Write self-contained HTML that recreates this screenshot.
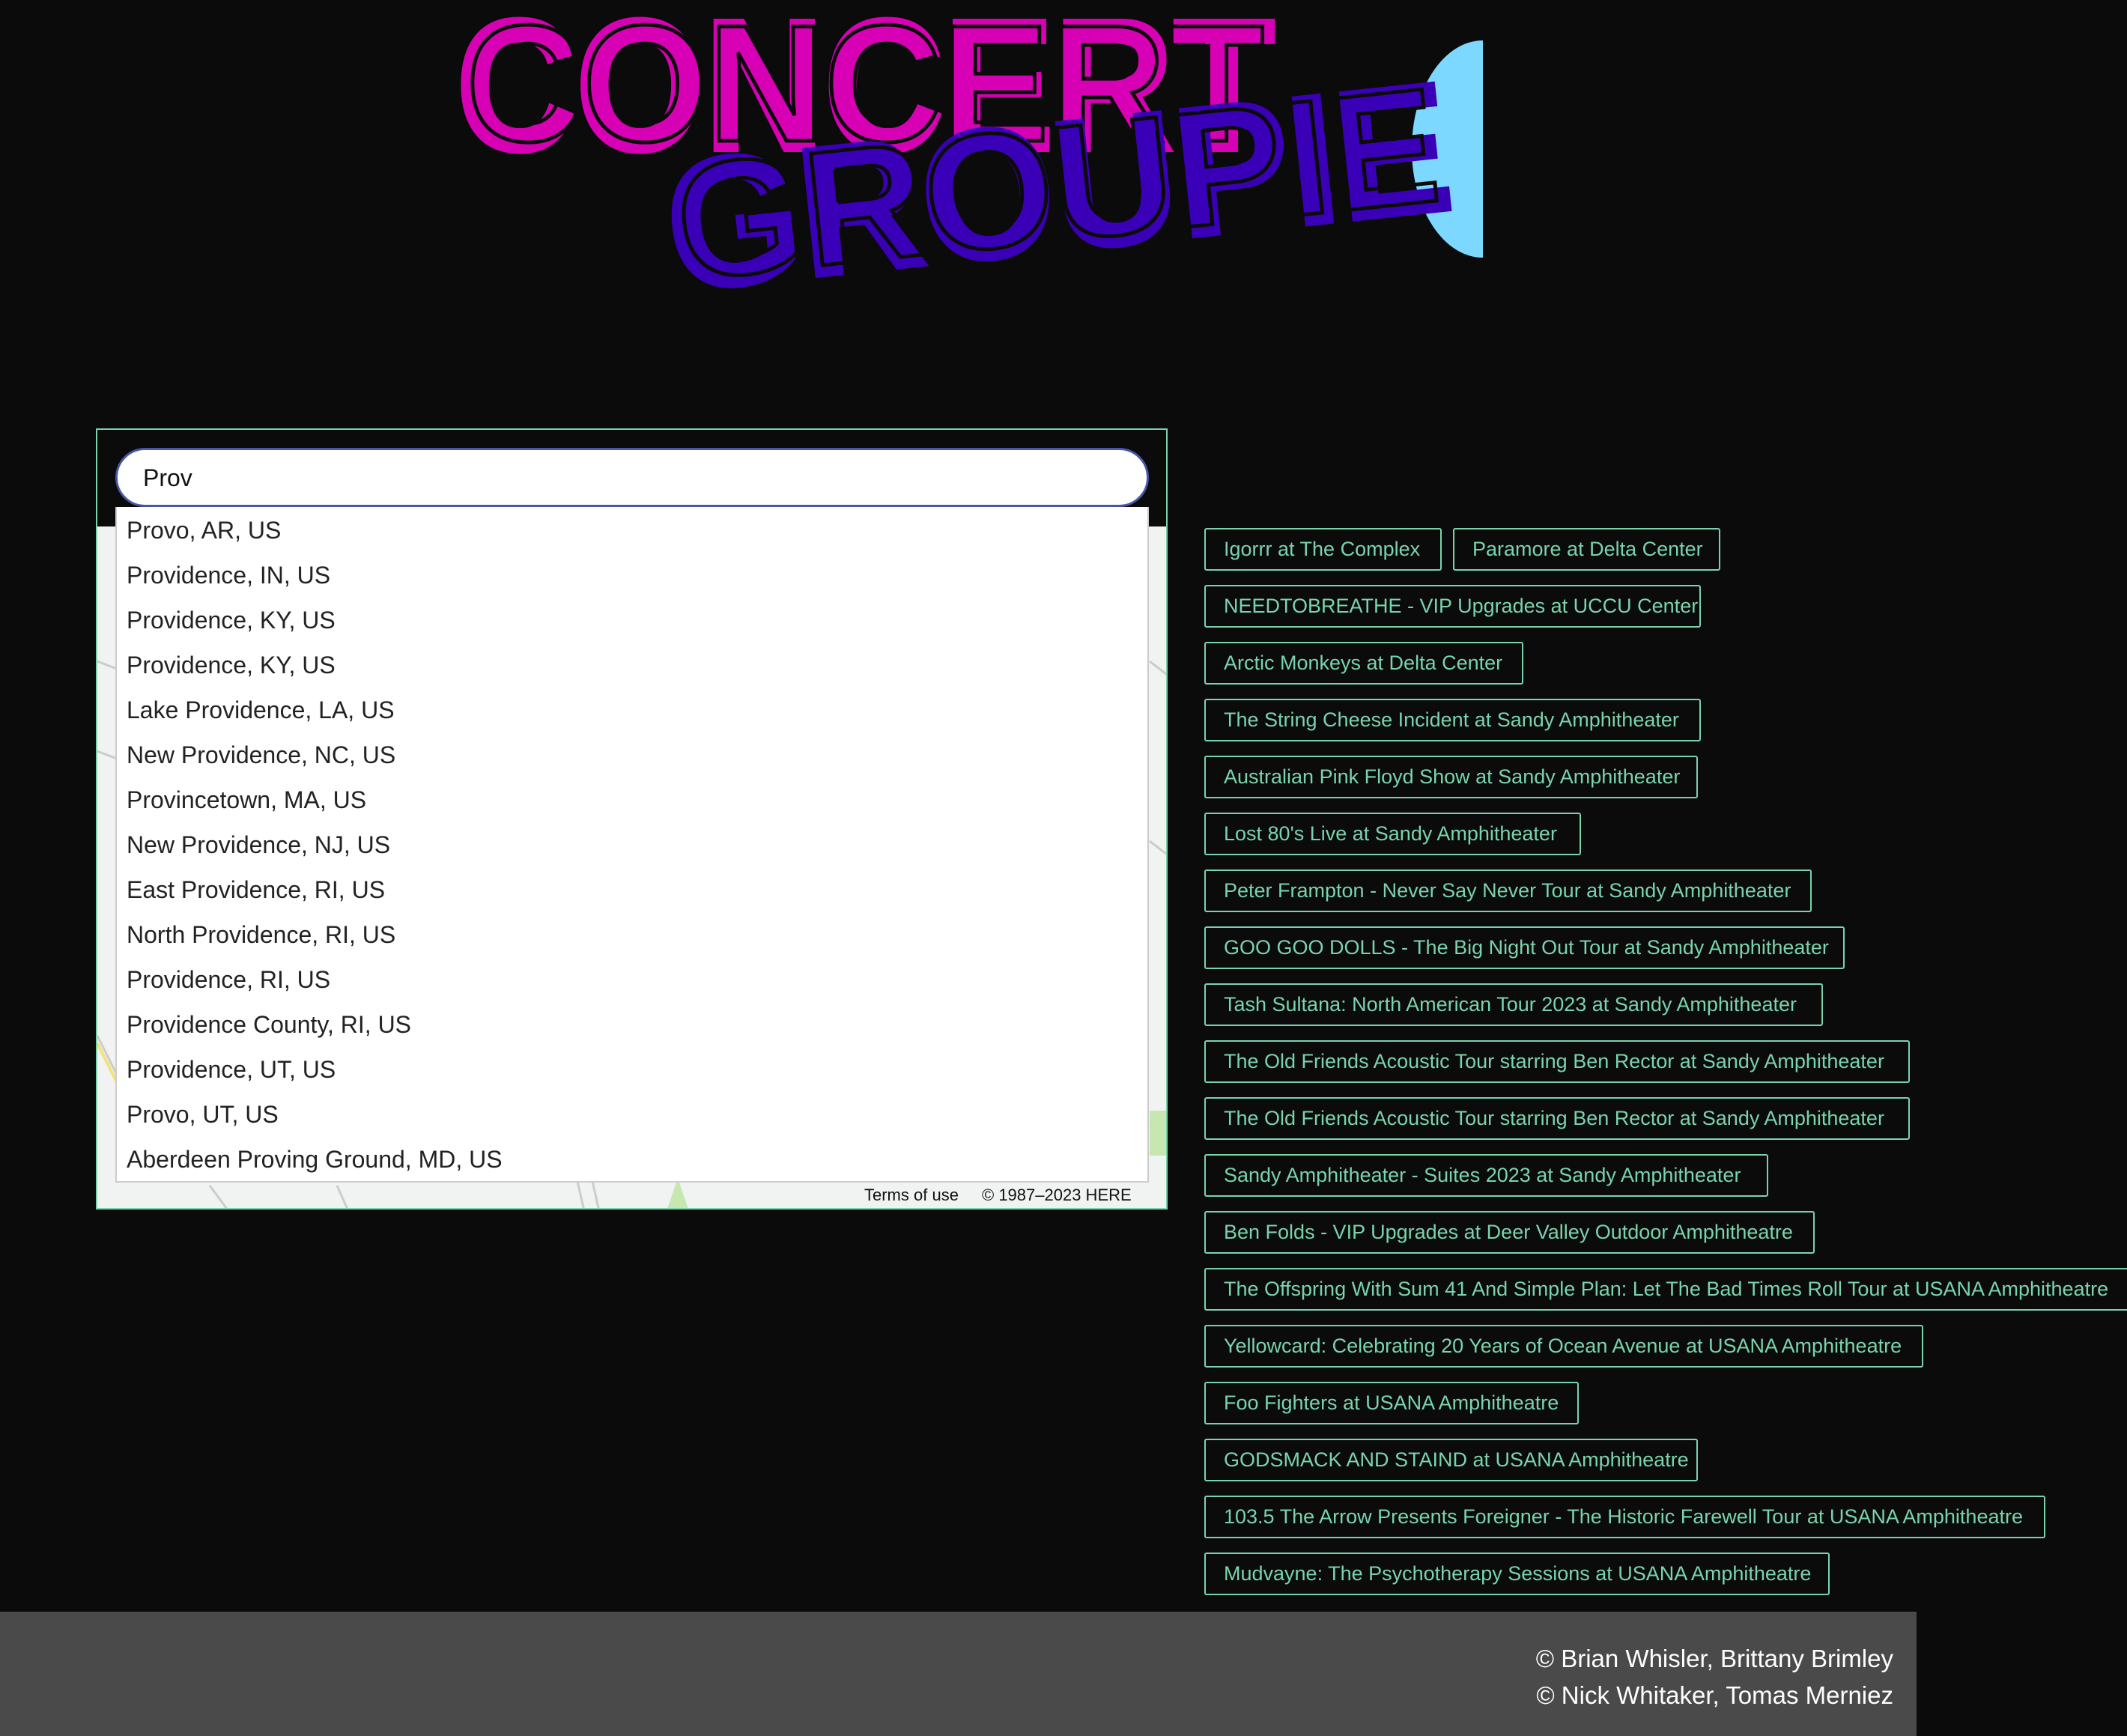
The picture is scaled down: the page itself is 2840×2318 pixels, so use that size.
<!DOCTYPE html>
<html><head><meta charset="utf-8"><style>
*{box-sizing:border-box;margin:0;padding:0}
html,body{width:2840px;height:2318px;background:#0b0b0b;overflow:hidden;font-family:"Liberation Sans",sans-serif;position:relative}
.map{position:absolute;left:128px;top:572px;width:1431px;height:1043px;border:2px solid #79d4ae;background:#0b0b0b}
.mapin{position:absolute;left:0;top:129px;right:0;bottom:0;background:#f1f2f2;overflow:hidden}
.input{position:absolute;left:154px;top:598px;width:1380px;height:79px;border:3px solid #4a56a6;border-radius:40px;background:#fff;font-size:32px;line-height:75px;padding-left:34px;color:#111}
.dd{position:absolute;left:154px;top:677px;width:1380px;height:902px;background:#fff;border:2px solid #ccc;border-top:none}
.dd div{height:60px;line-height:62px;font-size:32px;color:#222;padding-left:13px}
.btn{position:absolute;height:57px;border:2px solid #79d4ae;border-radius:3px;color:#79d4ae;font-size:27px;line-height:53px;padding-left:24px;white-space:nowrap;overflow:hidden}
.foot{position:absolute;left:0;top:2152px;width:2559px;height:166px;background:#4a4a4a;color:#fff;font-size:33px;text-align:right;padding-right:31px;padding-top:38px;line-height:49px}
.terms{position:absolute;top:1583px;font-size:22px;color:#111}
</style></head><body>
<svg style="position:absolute;left:0;top:0" width="2840" height="420">
<path d="M1980 54 A95 145 0 0 0 1980 344 Z" fill="#7dd8ff"/>
<g font-family="Liberation Sans" font-weight="bold">
<text x="609" y="200" font-size="250" textLength="1093" lengthAdjust="spacingAndGlyphs" fill="#d800b4" stroke="#d800b4" stroke-width="6">CONCERT</text>
<text x="622" y="188" font-size="222" textLength="1066" lengthAdjust="spacingAndGlyphs" fill="none" stroke="#0b0b0b" stroke-width="5">CONCERT</text>
<g transform="rotate(-6 900 388)">
<text x="900" y="388" font-size="245" textLength="1050" lengthAdjust="spacingAndGlyphs" fill="#3a00b8" stroke="#3a00b8" stroke-width="6">GROUPIE</text>
<text x="914" y="375" font-size="218" textLength="1020" lengthAdjust="spacingAndGlyphs" fill="none" stroke="#0b0b0b" stroke-width="5">GROUPIE</text>
</g></g></svg>
<div class="map"><div class="mapin">
<svg width="1431" height="914"><path d="M0 180 L26 190 M0 300 L26 310 M0 680 L40 760 M150 880 L175 914 M320 880 L335 914 M1405 180 L1431 200 M1405 420 L1431 440 M1405 800 L1431 820 M640 870 L650 914 M660 870 L670 914" stroke="#ccc" stroke-width="3" fill="none"/><path d="M0 690 L40 770" stroke="#f3e27a" stroke-width="4"/><rect x="1405" y="780" width="26" height="60" fill="#c6e8b0"/><path d="M760 914 L775 870 L790 914Z" fill="#c6e8b0"/></svg>
</div></div>
<div class="input">Prov</div>
<div class="dd">
<div>Provo, AR, US</div><div>Providence, IN, US</div><div>Providence, KY, US</div><div>Providence, KY, US</div><div>Lake Providence, LA, US</div><div>New Providence, NC, US</div><div>Provincetown, MA, US</div><div>New Providence, NJ, US</div><div>East Providence, RI, US</div><div>North Providence, RI, US</div><div>Providence, RI, US</div><div>Providence County, RI, US</div><div>Providence, UT, US</div><div>Provo, UT, US</div><div>Aberdeen Proving Ground, MD, US</div>
</div>
<div class="terms" style="left:1154px">Terms of use</div>
<div class="terms" style="left:1311px">© 1987–2023 HERE</div>

<div class="btn" style="left:1608px;top:705px;width:317px">Igorrr at The Complex</div>
<div class="btn" style="left:1940px;top:705px;width:357px">Paramore at Delta Center</div>
<div class="btn" style="left:1608px;top:781px;width:663px">NEEDTOBREATHE - VIP Upgrades at UCCU Center</div>
<div class="btn" style="left:1608px;top:857px;width:426px">Arctic Monkeys at Delta Center</div>
<div class="btn" style="left:1608px;top:933px;width:663px">The String Cheese Incident at Sandy Amphitheater</div>
<div class="btn" style="left:1608px;top:1009px;width:659px">Australian Pink Floyd Show at Sandy Amphitheater</div>
<div class="btn" style="left:1608px;top:1085px;width:503px">Lost 80's Live at Sandy Amphitheater</div>
<div class="btn" style="left:1608px;top:1161px;width:811px">Peter Frampton - Never Say Never Tour at Sandy Amphitheater</div>
<div class="btn" style="left:1608px;top:1237px;width:855px">GOO GOO DOLLS - The Big Night Out Tour at Sandy Amphitheater</div>
<div class="btn" style="left:1608px;top:1313px;width:826px">Tash Sultana: North American Tour 2023 at Sandy Amphitheater</div>
<div class="btn" style="left:1608px;top:1389px;width:942px">The Old Friends Acoustic Tour starring Ben Rector at Sandy Amphitheater</div>
<div class="btn" style="left:1608px;top:1465px;width:942px">The Old Friends Acoustic Tour starring Ben Rector at Sandy Amphitheater</div>
<div class="btn" style="left:1608px;top:1541px;width:753px">Sandy Amphitheater - Suites 2023 at Sandy Amphitheater</div>
<div class="btn" style="left:1608px;top:1617px;width:815px">Ben Folds - VIP Upgrades at Deer Valley Outdoor Amphitheatre</div>
<div class="btn" style="left:1608px;top:1693px;width:1240px">The Offspring With Sum 41 And Simple Plan: Let The Bad Times Roll Tour at USANA Amphitheatre</div>
<div class="btn" style="left:1608px;top:1769px;width:960px">Yellowcard: Celebrating 20 Years of Ocean Avenue at USANA Amphitheatre</div>
<div class="btn" style="left:1608px;top:1845px;width:500px">Foo Fighters at USANA Amphitheatre</div>
<div class="btn" style="left:1608px;top:1921px;width:659px">GODSMACK AND STAIND at USANA Amphitheatre</div>
<div class="btn" style="left:1608px;top:1997px;width:1123px">103.5 The Arrow Presents Foreigner - The Historic Farewell Tour at USANA Amphitheatre</div>
<div class="btn" style="left:1608px;top:2073px;width:835px">Mudvayne: The Psychotherapy Sessions at USANA Amphitheatre</div>

<div class="foot">© Brian Whisler, Brittany Brimley<br>© Nick Whitaker, Tomas Merniez</div>
</body></html>
